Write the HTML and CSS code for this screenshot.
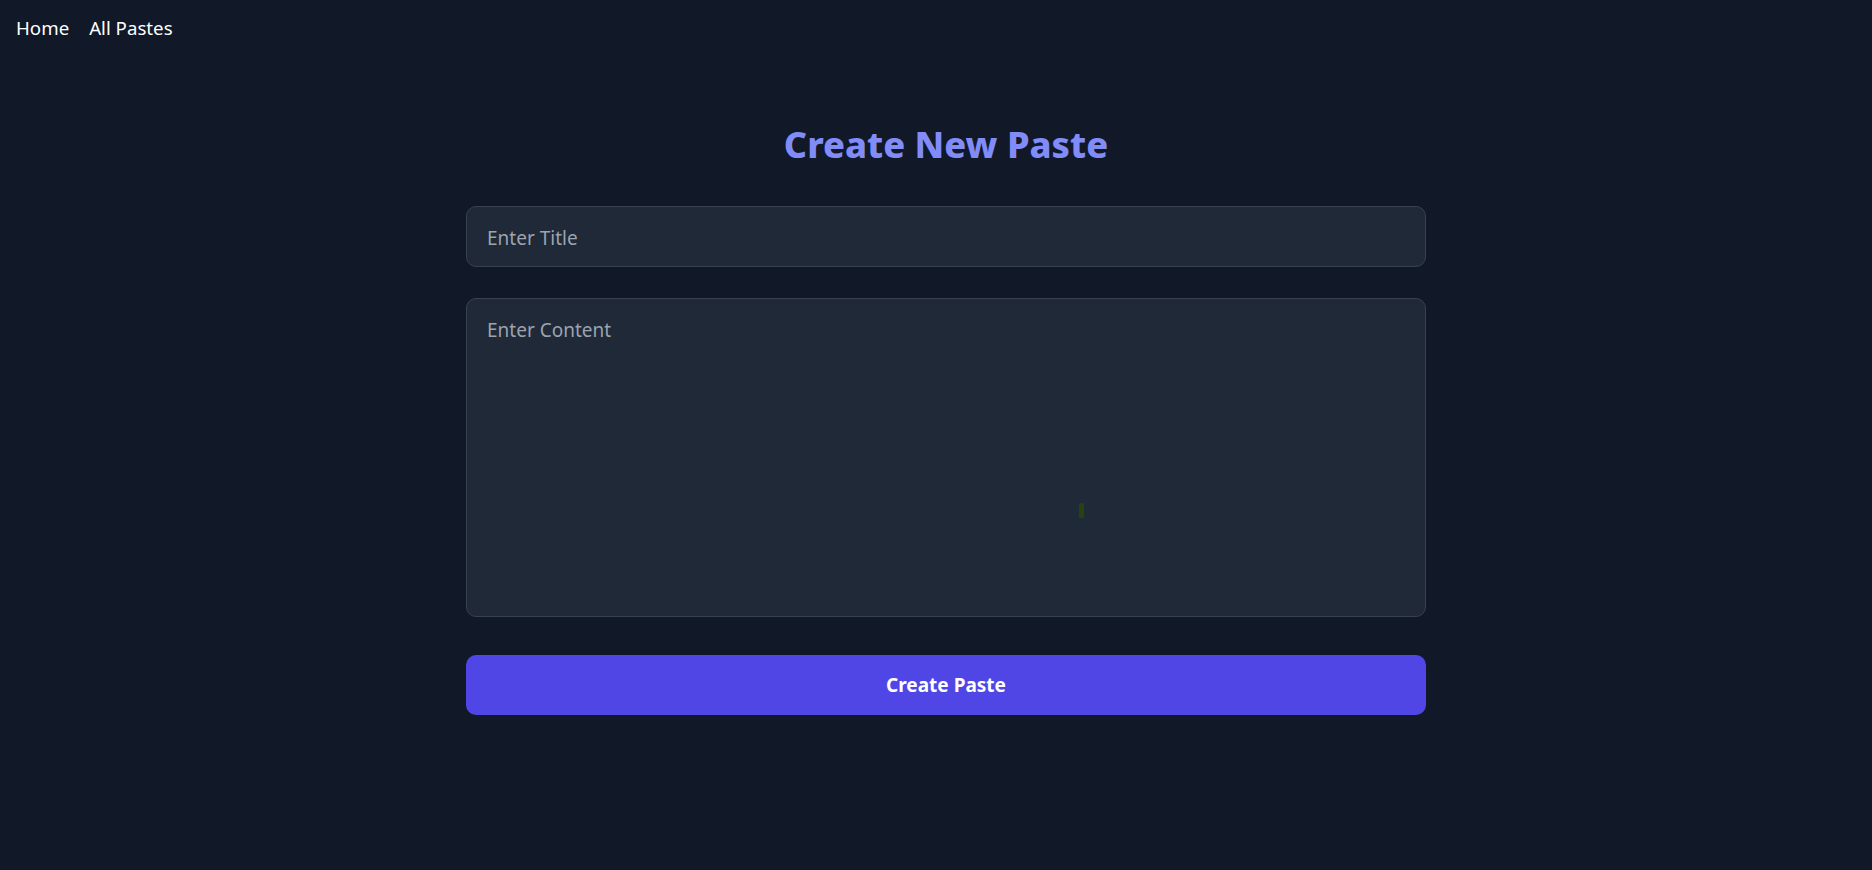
FILE: index.html
```html
<!DOCTYPE html>
<html lang="en">
<head>
<meta charset="utf-8">
<title>Create New Paste</title>
<link rel="stylesheet" href="styles.css">
</head>
<body>
<nav class="nav">
  <a class="nav-link" href="#">Home</a>
  <a class="nav-link" href="#">All Pastes</a>
</nav>
<main class="page">
  <div class="container">
    <h1 class="title">Create New Paste</h1>
    <form class="form">
      <input class="field field-input" type="text" placeholder="Enter Title">
      <div class="area-wrap">
        <textarea class="field field-area" placeholder="Enter Content"></textarea>
        <span class="cursor-mark"></span>
      </div>
      <button class="btn" type="button">Create Paste</button>
    </form>
  </div>
</main>
</body>
</html>
```
FILE: styles.css
```css
* { box-sizing: border-box; }
html, body { margin: 0; padding: 0; }
body {
  background: #111827;
  color: #ffffff;
  font-family: "Noto Sans", "Open Sans", sans-serif;
  min-height: 870px;
}
.nav {
  display: flex;
  gap: 20px;
  padding: 14px 16px 10px;
  height: 50px;
}
.nav-link {
  color: #ffffff;
  text-decoration: none;
  font-size: 18.7px;
  line-height: 27px;
}
.page {
  padding-left: 20px;
}
.container {
  width: 960px;
  margin: 0 auto;
  padding-top: 72px;
}
.title {
  margin: 0 0 39px;
  text-align: center;
  color: #818cf8;
  font-size: 36.2px;
  line-height: 45px;
  font-weight: 800;
}
.form {
  display: flex;
  flex-direction: column;
}
.field {
  width: 100%;
  background: #1f2937;
  border: 1px solid #374151;
  border-radius: 10px;
  color: #e5e7eb;
  font-family: inherit;
  font-size: 19px;
  padding: 0 20px;
  outline: none;
}
.field::placeholder { color: #9ca3af; }
.field-input {
  height: 61px;
  padding-top: 2px;
  margin-bottom: 31px;
}
.area-wrap {
  position: relative;
  margin-bottom: 38px;
}
.field-area {
  display: block;
  height: 319px;
  padding: 16px 20px 14px;
  line-height: 30px;
  resize: none;
}
.cursor-mark {
  position: absolute;
  left: 613px;
  top: 205px;
  width: 5px;
  height: 15px;
  background: #26420f;
  border-radius: 1px;
}
.btn {
  height: 60px;
  border: none;
  border-radius: 10px;
  background: #4f46e5;
  color: #ffffff;
  font-family: inherit;
  font-size: 19px;
  font-weight: 700;
}
```
